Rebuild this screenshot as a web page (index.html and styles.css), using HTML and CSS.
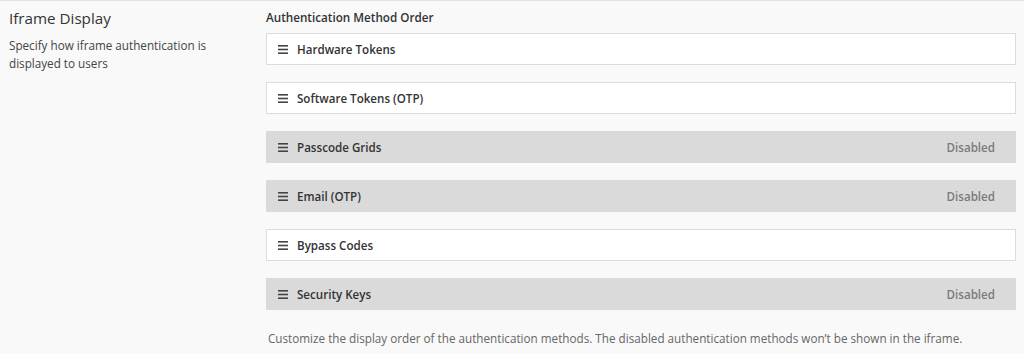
FILE: index.html
```html
<!DOCTYPE html>
<html lang="en">
<head>
  <meta charset="UTF-8" />
  <title>Iframe Display</title>
  <link rel="stylesheet" href="styles.css">
</head>
<body>

  <section class="setting">
    <!-- Left: section heading -->
    <div class="setting-info">
      <h2 class="setting-title">Iframe Display</h2>
      <p class="setting-desc">Specify how iframe authentication is displayed to users</p>
    </div>

    <!-- Right: sortable list -->
    <div class="setting-control">
      <div class="control-label">Authentication Method Order</div>
      <ul class="method-list">
        <li class="method">
          <svg class="handle" viewBox="0 0 10 9"><rect y="0" width="10" height="1.6"/><rect y="3.7" width="10" height="1.6"/><rect y="7.4" width="10" height="1.6"/></svg>
          <span class="method-name">Hardware Tokens</span>
        </li>
        <li class="method">
          <svg class="handle" viewBox="0 0 10 9"><rect y="0" width="10" height="1.6"/><rect y="3.7" width="10" height="1.6"/><rect y="7.4" width="10" height="1.6"/></svg>
          <span class="method-name">Software Tokens (OTP)</span>
        </li>
        <li class="method disabled">
          <svg class="handle" viewBox="0 0 10 9"><rect y="0" width="10" height="1.6"/><rect y="3.7" width="10" height="1.6"/><rect y="7.4" width="10" height="1.6"/></svg>
          <span class="method-name">Passcode Grids</span>
          <span class="method-status">Disabled</span>
        </li>
        <li class="method disabled">
          <svg class="handle" viewBox="0 0 10 9"><rect y="0" width="10" height="1.6"/><rect y="3.7" width="10" height="1.6"/><rect y="7.4" width="10" height="1.6"/></svg>
          <span class="method-name">Email (OTP)</span>
          <span class="method-status">Disabled</span>
        </li>
        <li class="method">
          <svg class="handle" viewBox="0 0 10 9"><rect y="0" width="10" height="1.6"/><rect y="3.7" width="10" height="1.6"/><rect y="7.4" width="10" height="1.6"/></svg>
          <span class="method-name">Bypass Codes</span>
        </li>
        <li class="method disabled">
          <svg class="handle" viewBox="0 0 10 9"><rect y="0" width="10" height="1.6"/><rect y="3.7" width="10" height="1.6"/><rect y="7.4" width="10" height="1.6"/></svg>
          <span class="method-name">Security Keys</span>
          <span class="method-status">Disabled</span>
        </li>
      </ul>
      <p class="control-help">Customize the display order of the authentication methods. The disabled authentication methods won’t be shown in the iframe.</p>
    </div>
  </section>

</body>
</html>
```

FILE: styles.css
```css
body {
  margin: 0;
  font-family: 'Open Sans', sans-serif;
  background-color: #f9f9f9;
  color: #333;
  border-top: 1px solid #e2e2e2;
}

/* Setting row */
.setting {
  display: flex;
  padding: 0 8px 0 9px;
}

.setting-info {
  width: 257px;
  flex-shrink: 0;
}

.setting-title {
  margin: 5px 0 0;
  font-size: 15.2px;
  font-weight: 400;
  line-height: 24px;
  color: #333;
}

.setting-desc {
  margin: 6px 0 0;
  font-size: 11.7px;
  line-height: 18px;
  color: #444;
  width: 220px;
}

/* Control column */
.setting-control {
  flex: 1;
}

.control-label {
  margin-top: 7px;
  font-size: 11.7px;
  font-weight: 600;
  line-height: 18px;
  color: #333;
}

.method-list {
  list-style: none;
  margin: 7px 0 0;
  padding: 0;
  display: flex;
  flex-direction: column;
  gap: 17px;
}

.method {
  display: flex;
  align-items: center;
  height: 32px;
  box-sizing: border-box;
  padding: 0 20px 0 11px;
  background: #fff;
  border: 1px solid #dcdcdc;
  font-size: 11.6px;
  font-weight: 600;
  color: #333;
}

.method.disabled {
  background: #dadada;
  border-color: #dadada;
}

.handle {
  width: 10px;
  height: 9px;
  margin-right: 9px;
  fill: #444;
}

.method-name {
  flex: 1;
}

.method-status {
  color: #7a7a7a;
}

.control-help {
  margin: 19px 0 0 2px;
  font-size: 11.7px;
  line-height: 18px;
  color: #666;
}
```
